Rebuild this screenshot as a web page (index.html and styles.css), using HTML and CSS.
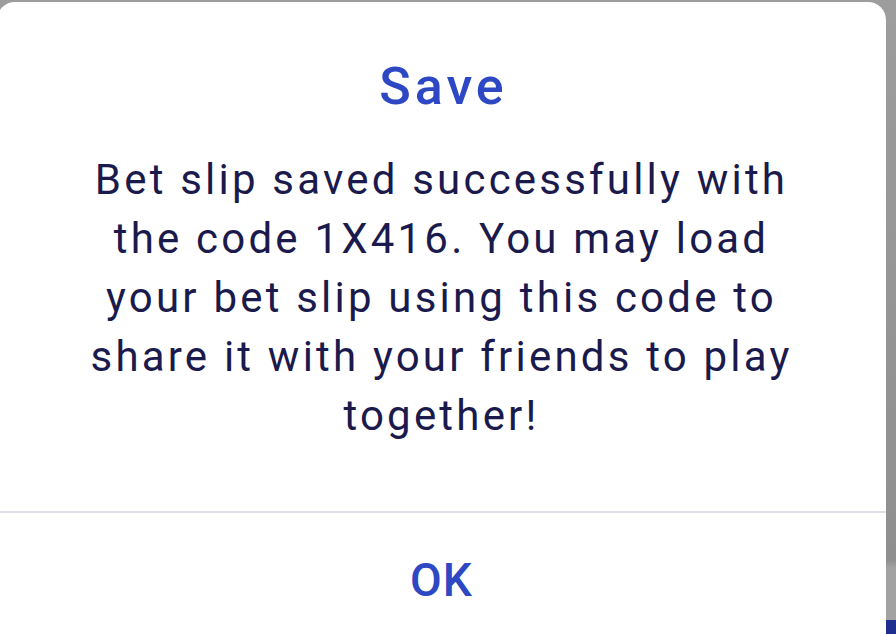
FILE: index.html
```html
<!DOCTYPE html>
<html lang="en">
<head>
  <meta charset="UTF-8">
  <meta name="viewport" content="width=device-width, initial-scale=1.0">
  <title>Save</title>
  <link rel="stylesheet" href="styles.css">
</head>
<body>
  <div class="backdrop">
    <div class="dialog">
      <h1 class="dialog-title">Save</h1>
      <p class="dialog-text">Bet slip saved successfully with the code 1X416. You may load your bet slip using this code to share it with your friends to play together!</p>
      <div class="dialog-actions">
        <button type="button">OK</button>
      </div>
    </div>
  </div>
</body>
</html>
```

FILE: styles.css
```css
html, body {
  margin: 0;
  padding: 0;
  height: 100%;
  overflow: hidden;
}
body {
  font-family: Roboto, 'Noto Sans', sans-serif;
  background: linear-gradient(to bottom, #9d9d9d 0, #8f8f8f 560px, #a2a2a2 568px, #a2a2a2 100%);
}
.backdrop {
  height: 100%;
  padding-top: 2px;
  box-sizing: border-box;
  position: relative;
}
.backdrop::after {
  content: '';
  position: absolute;
  right: 0;
  bottom: 0;
  width: 14px;
  height: 14px;
  background: #1f2f8f;
  clip-path: polygon(30% 0, 100% 0, 100% 100%, 0 100%);
}
.dialog {
  position: relative;
  z-index: 1;
  width: 889px;
  margin-left: -3px;
  height: 700px;
  padding-top: 54px;
  box-sizing: border-box;
  background: #fff;
  border-radius: 18px;
  text-align: center;
}
.dialog-title {
  margin: 0;
  font-size: 52px;
  font-weight: 500;
  line-height: 62px;
  letter-spacing: 4px;
  text-indent: 4px;
  color: #2e48c4;
}
.dialog-text {
  margin: 32px 80px 0;
  font-size: 42px;
  line-height: 59px;
  letter-spacing: 3.2px;
  color: #1b1a4c;
}
.dialog-actions {
  margin-top: 66px;
  border-top: 2px solid #dfe1e8;
}
.dialog-actions button {
  margin-top: 37px;
  background: none;
  border: none;
  padding: 0 20px;
  font-family: inherit;
  font-size: 46px;
  font-weight: 500;
  line-height: 60px;
  letter-spacing: 1px;
  color: #2e48c4;
  cursor: pointer;
}
```
